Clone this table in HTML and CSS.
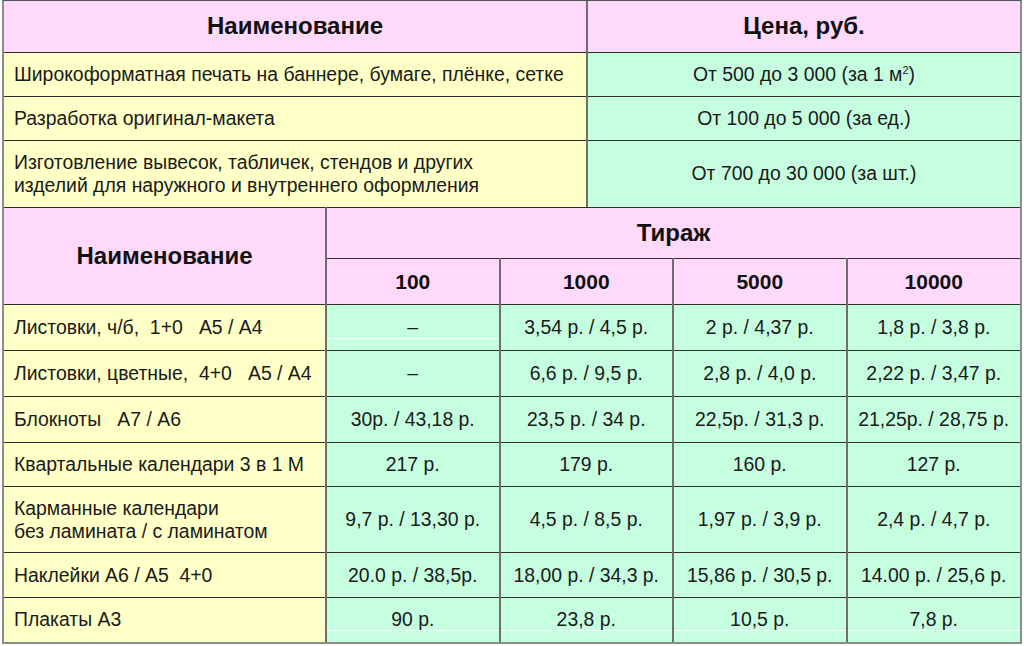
FILE: index.html
```html
<!DOCTYPE html>
<html lang="ru">
<head>
<meta charset="utf-8">
<link rel="stylesheet" href="styles.css">
</head>
<body>
<div class="sheet">
  <table class="tbl top">
    <colgroup><col class="c-name"><col class="c-price"></colgroup>
    <tr class="h51">
      <th class="pink">Наименование</th>
      <th class="pink">Цена, руб.</th>
    </tr>
    <tr class="h44">
      <td class="yellow name">Широкоформатная печать на баннере, бумаге, плёнке, сетке</td>
      <td class="mint">От 500 до 3 000 (за 1 м<sup>2</sup>)</td>
    </tr>
    <tr class="h44">
      <td class="yellow name">Разработка оригинал-макета</td>
      <td class="mint">От 100 до 5 000 (за ед.)</td>
    </tr>
    <tr class="h67">
      <td class="yellow name">Изготовление вывесок, табличек, стендов и других<br>изделий для наружного и внутреннего оформления</td>
      <td class="mint">От 700 до 30 000 (за шт.)</td>
    </tr>
  </table>
  <table class="tbl bottom">
    <colgroup><col class="c-first"><col class="c-q"><col class="c-q"><col class="c-q"><col class="c-q"></colgroup>
    <tr class="h51">
      <th class="pink" rowspan="2">Наименование</th>
      <th class="pink" colspan="4">Тираж</th>
    </tr>
    <tr class="h46">
      <th class="pink sub">100</th>
      <th class="pink sub">1000</th>
      <th class="pink sub">5000</th>
      <th class="pink sub">10000</th>
    </tr>
    <tr class="h46">
      <td class="yellow name">Листовки, ч/б, &nbsp;1+0 &nbsp; А5 / А4</td>
      <td class="mint dash streak">–</td>
      <td class="mint">3,54 р. / 4,5 р.</td>
      <td class="mint">2 р. / 4,37 р.</td>
      <td class="mint">1,8 р. / 3,8 р.</td>
    </tr>
    <tr class="h46">
      <td class="yellow name">Листовки, цветные, &nbsp;4+0 &nbsp; А5 / А4</td>
      <td class="mint dash">–</td>
      <td class="mint">6,6 р. / 9,5 р.</td>
      <td class="mint">2,8 р. / 4,0 р.</td>
      <td class="mint">2,22 р. / 3,47 р.</td>
    </tr>
    <tr class="h46">
      <td class="yellow name">Блокноты &nbsp; А7 / А6</td>
      <td class="mint">30р. / 43,18 р.</td>
      <td class="mint">23,5 р. / 34 р.</td>
      <td class="mint">22,5р. / 31,3 р.</td>
      <td class="mint">21,25р. / 28,75 р.</td>
    </tr>
    <tr class="h44">
      <td class="yellow name">Квартальные календари 3 в 1 М</td>
      <td class="mint">217 р.</td>
      <td class="mint">179 р.</td>
      <td class="mint">160 р.</td>
      <td class="mint">127 р.</td>
    </tr>
    <tr class="h66">
      <td class="yellow name">Карманные календари<br>без ламината / с ламинатом</td>
      <td class="mint">9,7 р. / 13,30 р.</td>
      <td class="mint">4,5 р. / 8,5 р.</td>
      <td class="mint">1,97 р. / 3,9 р.</td>
      <td class="mint">2,4 р. / 4,7 р.</td>
    </tr>
    <tr class="h45">
      <td class="yellow name">Наклейки А6 / А5 &nbsp;4+0</td>
      <td class="mint">20.0 р. / 38,5р.</td>
      <td class="mint">18,00 р. / 34,3 р.</td>
      <td class="mint">15,86 р. / 30,5 р.</td>
      <td class="mint">14.00 р. / 25,6 р.</td>
    </tr>
    <tr class="h44">
      <td class="yellow name">Плакаты А3</td>
      <td class="mint streak">90 р.</td>
      <td class="mint streak">23,8 р.</td>
      <td class="mint streak">10,5 р.</td>
      <td class="mint streak">7,8 р.</td>
    </tr>
  </table>
</div>
</body>
</html>
```

FILE: styles.css
```css
html, body {
  margin: 0;
  padding: 0;
  background: #ffffff;
}

body {
  font-family: "Liberation Sans", Arial, sans-serif;
  color: #1a1a1a;
}

.sheet {
  box-sizing: border-box;
  width: 1020px;
  margin: 0 2px;
  border-left: 2px solid #8c8c8c;
  border-right: 2px solid #8c8c8c;
  border-bottom: 2px solid #8c8c8c;
  border-top: 1px solid #555555;
}

.tbl {
  width: 100%;
  border-collapse: collapse;
  table-layout: fixed;
}

.tbl th,
.tbl td {
  padding: 0;
  text-align: center;
  vertical-align: middle;
  border-top: 1px solid #2e2e2e;
  border-left: 2px solid #6e6e6e;
}

.top tr:first-child > * {
  border-top: none;
}

.tbl th:first-child,
.tbl td:first-child {
  border-left: none;
}

.top .c-name { width: 583px; }
.bottom .c-first { width: 322px; }

.tbl th {
  font-weight: bold;
  font-size: 24px;
  color: #111;
}

.tbl th.sub {
  font-size: 21px;
}

.bottom tr:nth-child(2) th.sub:first-child {
  border-left: 2px solid #6e6e6e;
}

.tbl td {
  font-size: 19.4px;
  line-height: 23px;
}

.tbl td.name {
  text-align: left;
  padding-left: 10px;
}

.pink { background: #ffd9fa; }
.yellow { background: #ffffc8; }
.mint { background: #c6ffdf; }

.h44 { height: 44px; }
.h45 { height: 45px; }
.h46 { height: 46px; }
.h51 { height: 51px; }
.h66 { height: 66px; }
.h67 { height: 67px; }

sup {
  font-size: 11px;
  vertical-align: 7px;
  line-height: 0;
}

.dash {
  font-size: 15px;
}

.streak {
  position: relative;
}

.streak::after {
  content: "";
  position: absolute;
  left: 0;
  right: 0;
  bottom: 11px;
  height: 1px;
  background: #ffffff;
}
```
